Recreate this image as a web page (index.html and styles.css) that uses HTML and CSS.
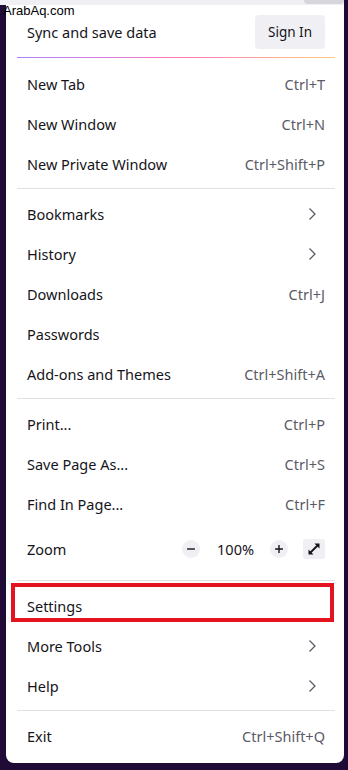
FILE: index.html
```html
<!DOCTYPE html>
<html lang="en">
<head>
<meta charset="UTF-8">
<meta name="viewport" content="width=device-width, initial-scale=1.0">
<title>Firefox menu</title>
<link rel="stylesheet" href="styles.css">
</head>
<body>
<div class="topbar"><span class="tab"></span></div>
<span class="watermark">ArabAq.com</span>

<div class="panel">
    <!-- account -->
    <div class="sync">
        <span>Sync and save data</span>
        <button class="signin">Sign In</button>
    </div>
    <div class="grad"></div>

    <div class="row"><span>New Tab</span><span class="key">Ctrl+T</span></div>
    <div class="row"><span>New Window</span><span class="key">Ctrl+N</span></div>
    <div class="row"><span>New Private Window</span><span class="key">Ctrl+Shift+P</span></div>
    <div class="sep"></div>

    <div class="row"><span>Bookmarks</span>
        <svg class="chev" viewBox="0 0 16 16"><path d="M5.5 2.5l5.5 5.5-5.5 5.5"/></svg></div>
    <div class="row"><span>History</span>
        <svg class="chev" viewBox="0 0 16 16"><path d="M5.5 2.5l5.5 5.5-5.5 5.5"/></svg></div>
    <div class="row"><span>Downloads</span><span class="key">Ctrl+J</span></div>
    <div class="row"><span>Passwords</span></div>
    <div class="row"><span>Add-ons and Themes</span><span class="key">Ctrl+Shift+A</span></div>
    <div class="sep"></div>

    <div class="row"><span>Print...</span><span class="key">Ctrl+P</span></div>
    <div class="row"><span>Save Page As...</span><span class="key">Ctrl+S</span></div>
    <div class="row"><span>Find In Page...</span><span class="key">Ctrl+F</span></div>
    <div class="row zoom">
        <span>Zoom</span>
        <div class="zoom-ctl">
            <span class="round">
                <svg viewBox="0 0 16 16"><path d="M3.5 8h9"/></svg>
            </span>
            <span class="pct">100%</span>
            <span class="round">
                <svg viewBox="0 0 16 16"><path d="M3.5 8h9M8 3.5v9"/></svg>
            </span>
            <span class="full">
                <svg viewBox="0 0 16 16">
                    <path d="M4 12L12 4"/>
                    <path class="fill" d="M2.5 13.5v-5l5 5zM13.5 2.5v5l-5-5z"/>
                </svg>
            </span>
        </div>
    </div>
    <div class="sep after-zoom"></div>

    <div class="row marked"><span>Settings</span></div>
    <div class="row"><span>More Tools</span>
        <svg class="chev" viewBox="0 0 16 16"><path d="M5.5 2.5l5.5 5.5-5.5 5.5"/></svg></div>
    <div class="row"><span>Help</span>
        <svg class="chev" viewBox="0 0 16 16"><path d="M5.5 2.5l5.5 5.5-5.5 5.5"/></svg></div>
    <div class="sep"></div>

    <div class="row"><span>Exit</span><span class="key">Ctrl+Shift+Q</span></div>
</div>
</body>
</html>
```

FILE: styles.css
```css
body {
    margin: 0; background: #1f0b35;
    font-family: "Noto Sans", sans-serif; color: #15141a;
    width: 348px; height: 770px; overflow: hidden;
}

.topbar {
    height: 5px; margin-right: 4px; background: #f0f0f4;
    display: flex; justify-content: flex-end;
}
.topbar .tab {
    width: 40px; height: 4px;
    background: #d6d6dc; border-radius: 0 0 6px 6px;
}

.watermark {
    position: absolute; left: 3px; top: 3px;
    font: 13px "Liberation Sans", sans-serif; color: #000;
}

.panel {
    margin: 0 4px 0 6px; background: #fff;
    border-radius: 0 0 8px 8px; padding-bottom: 7px;
}

.sync {
    display: flex; align-items: center; justify-content: space-between;
    padding: 10px 19px 8px 21px; font-size: 14.5px;
}
.signin {
    width: 70px; height: 34px; border: none; border-radius: 4px;
    background: #f0f0f4; color: #15141a;
    font: 13.5px "Noto Sans", sans-serif;
}
.grad {
    height: 1px; margin: 0 9px 6px 11px; opacity: .75;
    background: linear-gradient(90deg, #9059ff 0%, #ff4aa2 52%, #ffbd4f 100%);
}

.row {
    height: 40px; display: flex; align-items: center;
    justify-content: space-between; padding: 0 19px 0 21px;
    font-size: 14.5px; position: relative;
}
.key { color: #5b5b66; font-size: 14.5px; }

.chev { width: 16px; height: 16px; margin-right: 5px; }
.chev path { fill: none; stroke: #5b5b66; stroke-width: 1.3; }

.sep { height: 1px; background: #e0e0e6; margin: 4px 9px 5px 11px; }
.sep.after-zoom { margin-top: 6px; }

.zoom { height: 50px; }
.zoom-ctl { display: flex; align-items: center; }
.round {
    width: 18px; height: 18px; border-radius: 50%; background: #f0f0f4;
    display: flex; align-items: center; justify-content: center;
}
.round svg { width: 14px; height: 14px; }
.round path { stroke: #15141a; stroke-width: 1.6; fill: none; }
.pct { margin: 0 16px 0 17px; font-size: 14.5px; }
.full {
    width: 22px; height: 20px; margin-left: 15px; background: #f0f0f4;
    border-radius: 3px; display: flex; align-items: center; justify-content: center;
}
.full svg { width: 16px; height: 16px; }
.full path { stroke: #15141a; stroke-width: 1.8; fill: none; }
.full path.fill { fill: #15141a; stroke: none; }

.marked::after {
    content: ""; position: absolute; left: 5px; right: 10px;
    top: -3px; bottom: 4px; border: 4px solid #e3131f;
}
```
